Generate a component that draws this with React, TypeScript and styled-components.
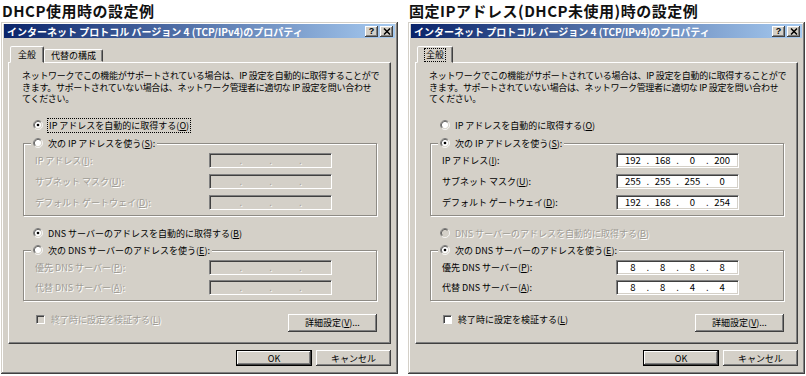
import React from 'react';
import styled, { createGlobalStyle, css } from 'styled-components';

const FACE = '#d4d0c8';
const JP = '"Noto Sans CJK JP", "Noto Sans", sans-serif';

const GlobalStyle = createGlobalStyle`
  html, body {
    margin: 0;
    padding: 0;
    background: #fff;
  }
  body {
    font-family: ${JP};
  }
`;

const Page = styled.div`
  display: flex;
  gap: 8px;
  width: 806px;
  height: 376px;
  overflow: hidden;
`;

const Column = styled.section`
  width: 399px;
  display: flex;
  flex-direction: column;
`;

const Heading = styled.h2`
  margin: 0;
  padding-left: 2px;
  font: bold 15px/22px ${JP};
  letter-spacing: 0.5px;
  color: #111;
  white-space: nowrap;
`;

const Window = styled.div`
  margin-left: 1px;
  width: 397px;
  height: 352px;
  box-sizing: border-box;
  padding: 2px 3px 3px;
  background: ${FACE};
  box-shadow: inset -1px -1px #404040, inset 1px 1px ${FACE}, inset -2px -2px #808080, inset 2px 2px #fff;
  font-size: 9px;
  color: #000;
  display: flex;
  flex-direction: column;
`;

const TitleBar = styled.div`
  height: 14px;
  display: flex;
  align-items: center;
  justify-content: space-between;
  padding: 0 2px 0 3px;
  background: linear-gradient(to right, #0a246a, #a6caf0);
`;

const Caption = styled.span`
  color: #fff;
  font-weight: bold;
  font-size: 10px;
  white-space: nowrap;
`;

const CaptionButtons = styled.div`
  display: flex;
  gap: 2px;
`;

const CaptionButton = styled.span`
  width: 13px;
  height: 11px;
  box-sizing: border-box;
  background: ${FACE};
  box-shadow: inset -1px -1px #404040, inset 1px 1px #fff, inset -2px -2px #808080;
  display: flex;
  align-items: center;
  justify-content: center;
  font: bold 9px/1 "Liberation Sans", sans-serif;
  color: #000;
`;

const Body = styled.div`
  padding: 8px 4px 0;
  display: flex;
  flex-direction: column;
`;

const TabStrip = styled.div`
  display: flex;
  align-items: flex-end;
  height: 16px;
  padding-left: 2px;
  position: relative;
  z-index: 1;
`;

const Tab = styled.div<{ $active?: boolean }>`
  box-sizing: border-box;
  height: ${(p) => (p.$active ? 17 : 13)}px;
  margin-bottom: ${(p) => (p.$active ? -1 : 0)}px;
  padding: ${(p) => (p.$active ? '2px 7px 0' : '0 6px')};
  border: 1px solid;
  border-color: #fff #404040 transparent #fff;
  border-radius: 2px 2px 0 0;
  box-shadow: inset -1px 0 #808080;
  background: ${FACE};
  display: flex;
  align-items: ${(p) => (p.$active ? 'flex-start' : 'center')};
  line-height: 12px;
  white-space: nowrap;
`;

const FocusText = styled.span`
  outline: 1px dotted #000;
  outline-offset: 0;
  padding: 0 1px;
`;

const Panel = styled.div`
  height: 282px;
  box-sizing: border-box;
  border: 1px solid;
  border-color: #fff #404040 #404040 #fff;
  box-shadow: inset -1px -1px #808080;
  padding: 7px 13px 0;
  display: flex;
  flex-direction: column;
`;

const Description = styled.p`
  margin: 0;
  line-height: 11.5px;
  white-space: nowrap;
  letter-spacing: -0.3px;
`;

const disabledText = css`
  color: #9f9c95;
  text-shadow: 1px 1px #fff;
`;

const Option = styled.div<{ $disabled?: boolean; $top?: number }>`
  display: flex;
  align-items: center;
  gap: 5px;
  height: 13px;
  margin-left: 11px;
  margin-top: ${(p) => p.$top ?? 0}px;
  white-space: nowrap;
  ${(p) => p.$disabled && disabledText}
`;

const Group = styled.fieldset<{ $top: number; $gap: number }>`
  margin: ${(p) => p.$top}px 0 0 1px;
  padding: 3px 0 5px 7px;
  border: 1px solid #8e8b85;
  box-shadow: inset 1px 1px #fff, 1px 1px #fff;
  display: flex;
  flex-direction: column;
  gap: ${(p) => p.$gap}px;
`;

const Legend = styled.legend`
  padding: 0 2px;
  height: 13px;
  background: ${FACE};
  display: flex;
  align-items: center;
  gap: 5px;
  white-space: nowrap;
`;

const FieldRow = styled.div<{ $disabled?: boolean }>`
  display: grid;
  grid-template-columns: 174px 123px;
  align-items: center;
  height: 15px;
  padding-left: 4px;
  white-space: nowrap;
  ${(p) => p.$disabled && disabledText}
`;

const IpBox = styled.div<{ $disabled?: boolean }>`
  width: 123px;
  height: 15px;
  box-sizing: border-box;
  border: 1px solid;
  border-color: #808080 #fff #fff #808080;
  box-shadow: inset 1px 1px #404040, inset -1px -1px ${FACE};
  background: ${(p) => (p.$disabled ? FACE : '#fff')};
  display: flex;
  align-items: center;
  padding: 0 3px;
  font-size: 9.5px;
  line-height: 13px;
  color: #000;
  text-shadow: none;
  ${(p) => p.$disabled && disabledText}
`;

const Octet = styled.span`
  flex: 1;
  text-align: center;
`;

const Dot = styled.span`
  width: 4px;
  text-align: center;
`;

const BottomRow = styled.div`
  display: flex;
  justify-content: space-between;
  align-items: flex-start;
  margin-top: 13px;
`;

const CheckOption = styled.div<{ $disabled?: boolean }>`
  display: flex;
  align-items: center;
  gap: 6px;
  height: 13px;
  margin: -1px 0 0 14px;
  white-space: nowrap;
  ${(p) => p.$disabled && disabledText}
`;

const CheckBox = styled.span<{ $disabled?: boolean }>`
  width: 9px;
  height: 9px;
  box-sizing: border-box;
  border: 1px solid;
  border-color: #808080 #fff #fff #808080;
  box-shadow: inset 1px 1px #404040;
  background: ${(p) => (p.$disabled ? FACE : '#fff')};
`;

const PushButton = styled.div<{ $default?: boolean; $width: number; $height: number }>`
  width: ${(p) => p.$width}px;
  height: ${(p) => p.$height}px;
  box-sizing: border-box;
  background: ${FACE};
  box-shadow: inset -1px -1px #404040, inset 1px 1px #fff, inset -2px -2px #808080;
  display: flex;
  align-items: center;
  justify-content: center;
  white-space: nowrap;
  ${(p) =>
    p.$default &&
    css`
      box-shadow: inset 0 0 0 1px #000, inset -2px -2px #404040, inset 2px 2px #fff, inset -3px -3px #808080;
    `}
`;

const DialogButtons = styled.div`
  display: flex;
  justify-content: flex-end;
  gap: 4px;
  margin-top: 6px;
`;

const Key = styled.span`
  text-decoration: underline;
`;

type Parts = [string, string, string];
type Octets = [string, string, string, string];

const Label: React.FC<{ parts: Parts }> = ({ parts }) => (
  <span>
    {parts[0]}
    <Key>{parts[1]}</Key>
    {parts[2]}
  </span>
);

const RadioMark: React.FC<{ checked: boolean; disabled?: boolean }> = ({ checked, disabled }) => (
  <svg width="10" height="10" viewBox="0 0 12 12">
    <circle cx="6" cy="6" r="4.2" fill={disabled ? FACE : '#fff'} />
    <path d="M2.11 9.89 A5.5 5.5 0 0 1 9.89 2.11" stroke="#808080" fill="none" />
    <path d="M9.89 2.11 A5.5 5.5 0 0 1 2.11 9.89" stroke="#fff" fill="none" />
    <path d="M2.82 9.18 A4.5 4.5 0 0 1 9.18 2.82" stroke="#404040" fill="none" />
    <path d="M9.18 2.82 A4.5 4.5 0 0 1 2.82 9.18" stroke={FACE} fill="none" />
    {checked && <circle cx="6" cy="6" r="1.6" fill={disabled ? '#808080' : '#000'} />}
  </svg>
);

const IpField: React.FC<{ value: Octets; disabled?: boolean }> = ({ value, disabled }) => (
  <IpBox $disabled={disabled}>
    {value.map((v, i) => (
      <React.Fragment key={i}>
        {i > 0 && <Dot>.</Dot>}
        <Octet>{v}</Octet>
      </React.Fragment>
    ))}
  </IpBox>
);

const EMPTY: Octets = ['', '', '', ''];

const IP_LABELS: Parts[] = [
  ['IP アドレス(', 'I', '):'],
  ['サブネット マスク(', 'U', '):'],
  ['デフォルト ゲートウェイ(', 'D', '):'],
];

const DNS_LABELS: Parts[] = [
  ['優先 DNS サーバー(', 'P', '):'],
  ['代替 DNS サーバー(', 'A', '):'],
];

type DialogProps = {
  tabs: string[];
  manual: boolean;
  ip: Octets[];
  dns: Octets[];
};

const PropertiesDialog: React.FC<DialogProps> = ({ tabs, manual, ip, dns }) => {
  const auto = !manual;
  return (
    <Window>
      <TitleBar>
        <Caption>インターネット プロトコル バージョン 4 (TCP/IPv4)のプロパティ</Caption>
        <CaptionButtons>
          <CaptionButton>?</CaptionButton>
          <CaptionButton>
            <svg width="8" height="7" viewBox="0 0 8 7">
              <path d="M1 0.5 L7 6.5 M7 0.5 L1 6.5" stroke="#000" strokeWidth="1.5" />
            </svg>
          </CaptionButton>
        </CaptionButtons>
      </TitleBar>
      <Body>
        <TabStrip>
          {tabs.map((t, i) => (
            <Tab key={t} $active={i === 0}>
              {i === 0 && manual ? <FocusText>{t}</FocusText> : t}
            </Tab>
          ))}
        </TabStrip>
        <Panel>
          <Description>
            ネットワークでこの機能がサポートされている場合は、IP 設定を自動的に取得することがで
            <br />
            きます。サポートされていない場合は、ネットワーク管理者に適切な IP 設定を問い合わせ
            <br />
            てください。
          </Description>

          <Option $top={14}>
            <RadioMark checked={auto} />
            {auto ? (
              <FocusText>
                <Label parts={['IP アドレスを自動的に取得する(', 'O', ')']} />
              </FocusText>
            ) : (
              <Label parts={['IP アドレスを自動的に取得する(', 'O', ')']} />
            )}
          </Option>
          <Group $top={5} $gap={6}>
            <Legend>
              <RadioMark checked={manual} />
              <Label parts={['次の IP アドレスを使う(', 'S', '):']} />
            </Legend>
            {IP_LABELS.map((l, i) => (
              <FieldRow key={l[1]} $disabled={auto}>
                <Label parts={l} />
                <IpField value={ip[i] ?? EMPTY} disabled={auto} />
              </FieldRow>
            ))}
          </Group>

          <Option $top={11} $disabled={manual}>
            <RadioMark checked={auto} disabled={manual} />
            <Label parts={['DNS サーバーのアドレスを自動的に取得する(', 'B', ')']} />
          </Option>
          <Group $top={4} $gap={5}>
            <Legend>
              <RadioMark checked={manual} />
              <Label parts={['次の DNS サーバーのアドレスを使う(', 'E', '):']} />
            </Legend>
            {DNS_LABELS.map((l, i) => (
              <FieldRow key={l[1]} $disabled={auto}>
                <Label parts={l} />
                <IpField value={dns[i] ?? EMPTY} disabled={auto} />
              </FieldRow>
            ))}
          </Group>

          <BottomRow>
            <CheckOption $disabled={auto}>
              <CheckBox $disabled={auto} />
              <Label parts={['終了時に設定を検証する(', 'L', ')']} />
            </CheckOption>
            <PushButton $width={89} $height={18}>
              <Label parts={['詳細設定(', 'V', ')...']} />
            </PushButton>
          </BottomRow>
        </Panel>
        <DialogButtons>
          <PushButton $default $width={76} $height={16}>
            OK
          </PushButton>
          <PushButton $width={75} $height={16}>
            キャンセル
          </PushButton>
        </DialogButtons>
      </Body>
    </Window>
  );
};

export default function App() {
  return (
    <>
      <GlobalStyle />
      <Page>
        <Column>
          <Heading>DHCP使用時の設定例</Heading>
          <PropertiesDialog tabs={['全般', '代替の構成']} manual={false} ip={[]} dns={[]} />
        </Column>
        <Column>
          <Heading>固定IPアドレス(DHCP未使用)時の設定例</Heading>
          <PropertiesDialog
            tabs={['全般']}
            manual
            ip={[
              ['192', '168', '0', '200'],
              ['255', '255', '255', '0'],
              ['192', '168', '0', '254'],
            ]}
            dns={[
              ['8', '8', '8', '8'],
              ['8', '8', '4', '4'],
            ]}
          />
        </Column>
      </Page>
    </>
  );
}
